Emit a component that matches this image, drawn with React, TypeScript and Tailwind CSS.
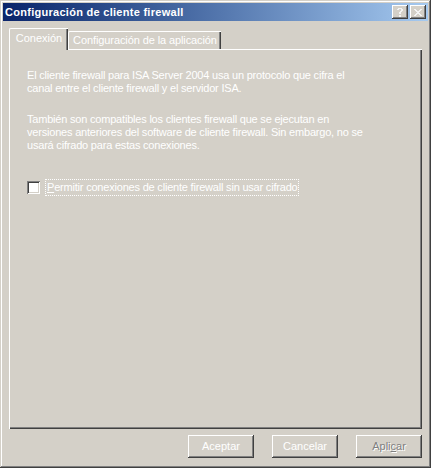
const raised =
  'shadow-[inset_-1px_-1px_0_#404040,inset_1px_1px_0_#ffffff,inset_-2px_-2px_0_#808080,inset_2px_2px_0_#d4d0c8]'

function HelpGlyph() {
  // pixel "?" like the classic caption button
  const px: [number, number][] = [
    [1, 0], [2, 0], [3, 0], [4, 0],
    [0, 1], [1, 1], [4, 1], [5, 1],
    [4, 2], [5, 2],
    [3, 3], [4, 3],
    [2, 4], [3, 4],
    [2, 5], [3, 5],
    [2, 7], [3, 7],
    [2, 8], [3, 8],
  ]
  return (
    <svg width="6" height="9" viewBox="0 0 6 9" shapeRendering="crispEdges">
      {px.map(([x, y]) => (
        <rect key={`${x}-${y}`} x={x} y={y} width="1" height="1" fill="#f4f4f4" />
      ))}
    </svg>
  )
}

function CloseGlyph() {
  const rows = ['XX....XX', '.XX..XX.', '..XXXX..', '...XX...', '..XXXX..', '.XX..XX.', 'XX....XX']
  return (
    <svg width="8" height="7" viewBox="0 0 8 7" shapeRendering="crispEdges">
      {rows.flatMap((r, y) =>
        r.split('').map((c, x) =>
          c === 'X' ? <rect key={`${x}-${y}`} x={x} y={y} width="1" height="1" fill="#f4f4f4" /> : null,
        ),
      )}
    </svg>
  )
}

function CaptionButton({ children }: { children: React.ReactNode }) {
  return (
    <div className={`w-[16px] h-[14px] bg-[#d4d0c8] flex items-center justify-center ${raised}`}>{children}</div>
  )
}

function DialogButton({ label, disabled }: { label: React.ReactNode; disabled?: boolean }) {
  return (
    <div
      className={`w-[66px] h-[23px] flex items-center justify-center ${raised} ${
        disabled ? 'text-[#808080] [text-shadow:1px_1px_0_#ffffff]' : 'text-white'
      }`}
    >
      {label}
    </div>
  )
}

export default function App() {
  return (
    <div className="w-[431px] h-[468px] bg-[#d4d0c8] p-[3px] flex flex-col shadow-[inset_-1px_-1px_0_#404040,inset_1px_1px_0_#d4d0c8,inset_-2px_-2px_0_#808080,inset_2px_2px_0_#ffffff] font-['Liberation_Sans',Arial,sans-serif] text-[11px] leading-[13px] tracking-[-0.2px] text-white select-none">
      {/* caption */}
      <div className="h-[18px] shrink-0 bg-gradient-to-r from-[#0a246a] to-[#a6caf0] flex items-center pl-[2px] pr-[2px]">
        <span className="font-bold text-white text-[11px] tracking-[0.28px]">Configuración de cliente firewall</span>
        <div className="ml-auto flex gap-[2px]">
          <CaptionButton>
            <HelpGlyph />
          </CaptionButton>
          <CaptionButton>
            <CloseGlyph />
          </CaptionButton>
        </div>
      </div>

      {/* tabs */}
      <div className="mt-[7px] mx-[6px] flex flex-col">
        <div className="flex items-end h-[21px]">
          <div className="relative z-10 -mb-px h-[22px] w-[59px] bg-[#d4d0c8] border-l border-t border-white rounded-tl-[2px] shadow-[inset_-1px_0_0_#404040,inset_-2px_0_0_#808080] flex items-center justify-center pb-[3px] tracking-normal">
            Conexión
          </div>
          <div className="h-[18px] w-[153px] border-l border-t border-white rounded-tl-[2px] shadow-[inset_-1px_0_0_#404040,inset_-2px_0_0_#808080] flex items-center justify-center pb-px tracking-[-0.1px]">
            Configuración de la aplicación
          </div>
        </div>

        <div className="h-[380px] border-l border-t border-white shadow-[inset_-1px_-1px_0_#404040,inset_-2px_-2px_0_#808080] pl-[17px] pt-[19px]">
          <p>
            El cliente firewall para ISA Server 2004 usa un protocolo que cifra el
            <br />
            canal entre el cliente firewall y el servidor ISA.
          </p>
          <p className="mt-[18px]">
            También son compatibles los clientes firewall que se ejecutan en
            <br />
            versiones anteriores del software de cliente firewall. Sin embargo, no se
            <br />
            usará cifrado para estas conexiones.
          </p>
          <div className="mt-[27px] flex items-center">
            <div className="w-[13px] h-[13px] bg-white shadow-[inset_1px_1px_0_#808080,inset_-1px_-1px_0_#ffffff,inset_2px_2px_0_#404040,inset_-2px_-2px_0_#d4d0c8]" />
            <span className="ml-[5px] px-px border border-dotted border-white leading-[15px]">
              <span className="underline underline-offset-1">P</span>ermitir conexiones de cliente firewall sin usar cifrado
            </span>
          </div>
        </div>
      </div>

      {/* buttons */}
      <div className="mt-[6px] flex justify-end gap-[18px] pr-[6px] tracking-normal">
        <DialogButton label="Aceptar" />
        <DialogButton label="Cancelar" />
        <DialogButton
          disabled
          label={
            <span>
              Apli<span className="underline underline-offset-1">c</span>ar
            </span>
          }
        />
      </div>
    </div>
  )
}
